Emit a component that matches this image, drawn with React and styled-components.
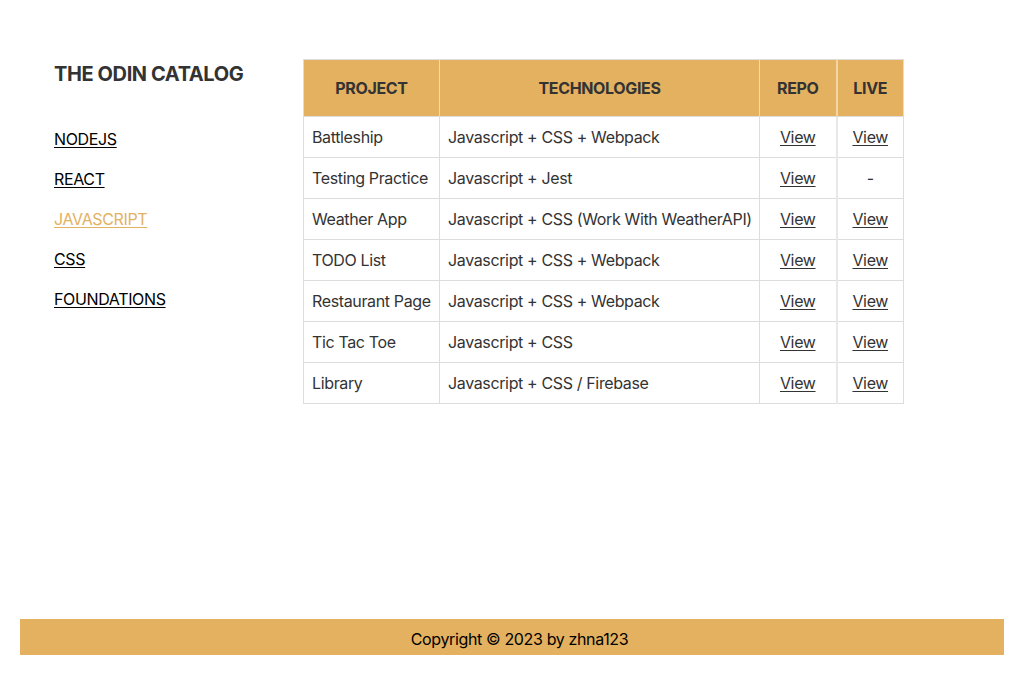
import React from "react";
import styled, { createGlobalStyle } from "styled-components";

const GlobalStyle = createGlobalStyle`
  * { box-sizing: border-box; }
  html, body { margin: 0; padding: 0; background: #ffffff; }
  body {
    font-family: Inter, "Noto Sans", "Liberation Sans", sans-serif;
    color: #333333;
    letter-spacing: -0.36px;
  }
`;

const Page = styled.div`
  min-height: 681px;
  display: flex;
  flex-direction: column;
`;

const Main = styled.main`
  flex: 1;
  display: flex;
  padding: 59px 0 0 54px;
`;

const Sidebar = styled.aside`
  width: 249px;
  display: flex;
  flex-direction: column;
`;

const Title = styled.h1`
  margin: 0;
  padding-top: 3px;
  font-size: 20px;
  line-height: 24px;
  font-weight: 700;
  color: #333333;
  letter-spacing: -0.4px;
`;

const NavList = styled.ul`
  list-style: none;
  margin: 0;
  padding: 0;
  margin-top: 33px;
  display: flex;
  flex-direction: column;
`;

const NavItem = styled.li`
  height: 40px;
  line-height: 40px;
  font-size: 16px;
`;

const NavLink = styled.a`
  color: ${(p) => (p.$active ? "#e3b15f" : "#000000")};
  text-decoration: underline;
  text-underline-offset: 2px;
`;

const Table = styled.table`
  border-collapse: collapse;
  table-layout: fixed;
  width: 601px;
  height: 345px;
  align-self: flex-start;
  font-size: 16px;
`;

const HeadCell = styled.th`
  height: 57px;
  background: #e3b15f;
  color: #333333;
  font-weight: 700;
  text-align: center;
  border: 1px solid #dddddd;
  border-right: ${(p) => (p.$light ? "2px solid #f2d6a4" : "1px solid #dddddd")};
  padding: 0;
`;

const Cell = styled.td`
  height: 41px;
  border: 1px solid #dddddd;
  border-right: ${(p) => (p.$light ? "2px solid #e8e8e8" : "1px solid #dddddd")};
  padding: 0 8px;
  text-align: ${(p) => (p.$center ? "center" : "left")};
  color: #333333;
  white-space: nowrap;
`;

const ViewLink = styled.a`
  color: #333333;
  text-decoration: underline;
  text-underline-offset: 2px;
`;

const Footer = styled.footer`
  margin: 0 20px 26px;
  height: 36px;
  padding: 3px 0 0 15px;
  background: #e3b15f;
  display: flex;
  align-items: center;
  justify-content: center;
  font-size: 16px;
  color: #000000;
`;

const nav = ["NODEJS", "REACT", "JAVASCRIPT", "CSS", "FOUNDATIONS"];

const rows = [
  ["Battleship", "Javascript + CSS + Webpack", true, true],
  ["Testing Practice", "Javascript + Jest", true, false],
  ["Weather App", "Javascript + CSS (Work With WeatherAPI)", true, true],
  ["TODO List", "Javascript + CSS + Webpack", true, true],
  ["Restaurant Page", "Javascript + CSS + Webpack", true, true],
  ["Tic Tac Toe", "Javascript + CSS", true, true],
  ["Library", "Javascript + CSS / Firebase", true, true],
];

export default function App() {
  return (
    <>
      <GlobalStyle />
      <Page>
        <Main>
          <Sidebar>
            <Title>THE ODIN CATALOG</Title>
            <NavList>
              {nav.map((n) => (
                <NavItem key={n}>
                  <NavLink href="#" $active={n === "JAVASCRIPT"}>
                    {n}
                  </NavLink>
                </NavItem>
              ))}
            </NavList>
          </Sidebar>
          <Table>
            <colgroup>
              <col style={{ width: 136 }} />
              <col style={{ width: 320 }} />
              <col style={{ width: 77 }} />
              <col style={{ width: 67 }} />
            </colgroup>
            <thead>
              <tr>
                <HeadCell>PROJECT</HeadCell>
                <HeadCell>TECHNOLOGIES</HeadCell>
                <HeadCell $light>REPO</HeadCell>
                <HeadCell>LIVE</HeadCell>
              </tr>
            </thead>
            <tbody>
              {rows.map(([name, tech, repo, live]) => (
                <tr key={name}>
                  <Cell>{name}</Cell>
                  <Cell>{tech}</Cell>
                  <Cell $center $light>
                    {repo ? <ViewLink href="#">View</ViewLink> : "-"}
                  </Cell>
                  <Cell $center>
                    {live ? <ViewLink href="#">View</ViewLink> : "-"}
                  </Cell>
                </tr>
              ))}
            </tbody>
          </Table>
        </Main>
        <Footer>Copyright © 2023 by zhna123</Footer>
      </Page>
    </>
  );
}
